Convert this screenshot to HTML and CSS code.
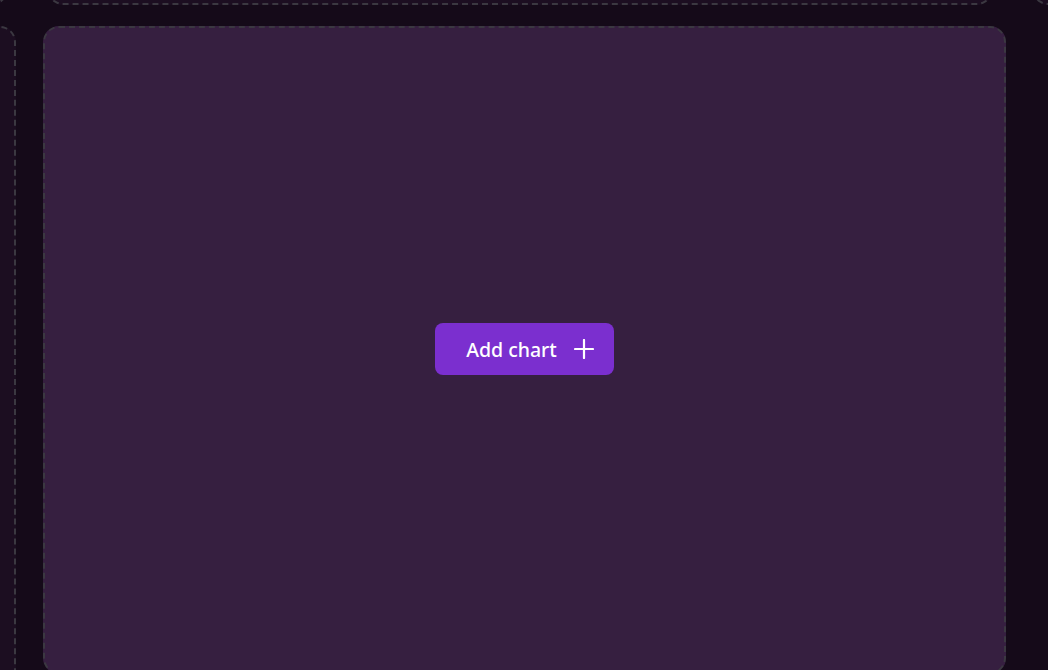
FILE: index.html
```html
<!DOCTYPE html>
<html lang="en">
<head>
    <meta charset="UTF-8">
    <meta name="viewport" content="width=device-width, initial-scale=1.0">
    <title>Dashboard - Charts</title>
    <link rel="stylesheet" href="styles.css">
</head>
<body>

    <div class="board">
        <div class="row row-top">
            <div class="tile tile-side"></div>
            <div class="tile tile-wide"></div>
            <div class="tile tile-side"></div>
        </div>

        <div class="row row-main">
            <div class="tile tile-side tile-tall"></div>
            <div class="tile tile-main">
                <button class="add-btn" type="button">
                    <span>Add chart</span>
                    <svg width="20" height="20" viewBox="0 0 20 20" fill="none" stroke="currentColor" stroke-width="2.2" stroke-linecap="round">
                        <path d="M10 1v18M1 10h18"/>
                    </svg>
                </button>
            </div>
        </div>
    </div>

</body>
</html>
```

FILE: styles.css
```css
* { margin: 0; padding: 0; box-sizing: border-box; font-family: 'Noto Sans', sans-serif; }
body { background: #150a19; overflow: hidden; height: 670px; }

.board { display: flex; flex-direction: column; gap: 21px; margin-top: -155px; }
.row { display: flex; }
.row-top { gap: 39px; margin-left: -192px; height: 160px; }
.row-main { gap: 27px; margin-left: -184px; }

.tile {
    flex: none; border: 2px dashed #3b3841; border-radius: 16px;
    background: #1c0e21;
}
.tile-side { width: 200px; }
.tile-wide { width: 946px; }
.tile-tall { height: 660px; }

.tile-main {
    width: 963px; height: 648px; background: #361f40;
    display: flex; align-items: center; justify-content: center;
    padding-bottom: 2px;
}

.add-btn {
    display: flex; align-items: center; gap: 17px;
    height: 52px; padding: 0 20px 0 31px; border: none; border-radius: 8px;
    background: #7b2fcf; color: #fff; font-size: 19.5px; font-weight: 500; cursor: pointer;
}
.add-btn span { font-family: 'Noto Sans', sans-serif; }
.add-btn svg { display: block; }
```
